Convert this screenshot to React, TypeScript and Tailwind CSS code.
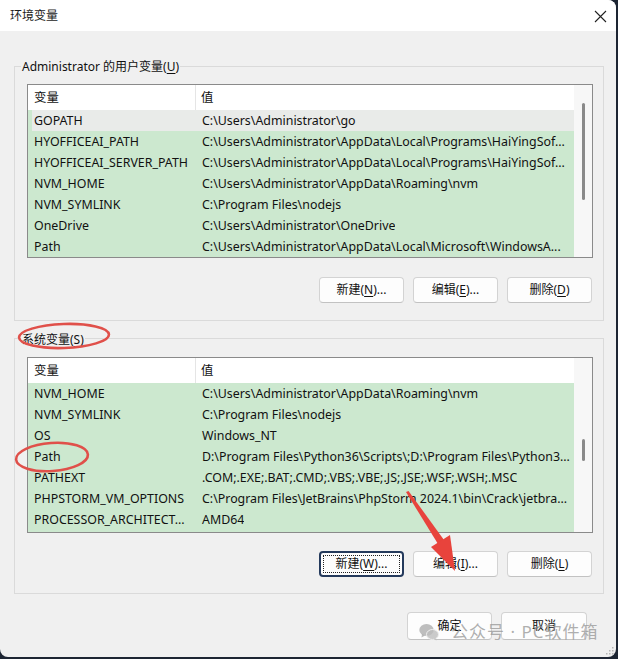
import React from "react";

const U = ({ children }: { children: React.ReactNode }) => (
  <span className="underline underline-offset-[2px] decoration-[1px]">{children}</span>
);

type Row = [string, string];

const userRows: Row[] = [
  ["GOPATH", "C:\\Users\\Administrator\\go"],
  ["HYOFFICEAI_PATH", "C:\\Users\\Administrator\\AppData\\Local\\Programs\\HaiYingSof..."],
  ["HYOFFICEAI_SERVER_PATH", "C:\\Users\\Administrator\\AppData\\Local\\Programs\\HaiYingSof..."],
  ["NVM_HOME", "C:\\Users\\Administrator\\AppData\\Roaming\\nvm"],
  ["NVM_SYMLINK", "C:\\Program Files\\nodejs"],
  ["OneDrive", "C:\\Users\\Administrator\\OneDrive"],
  ["Path", "C:\\Users\\Administrator\\AppData\\Local\\Microsoft\\WindowsA..."],
];

const sysRows: Row[] = [
  ["NVM_HOME", "C:\\Users\\Administrator\\AppData\\Roaming\\nvm"],
  ["NVM_SYMLINK", "C:\\Program Files\\nodejs"],
  ["OS", "Windows_NT"],
  ["Path", "D:\\Program Files\\Python36\\Scripts\\;D:\\Program Files\\Python3..."],
  ["PATHEXT", ".COM;.EXE;.BAT;.CMD;.VBS;.VBE;.JS;.JSE;.WSF;.WSH;.MSC"],
  ["PHPSTORM_VM_OPTIONS", "C:\\Program Files\\JetBrains\\PhpStorm 2024.1\\bin\\Crack\\jetbra..."],
  ["PROCESSOR_ARCHITECT...", "AMD64"],
  ["", ""],
];

function VarList({
  rows,
  heightClass,
  thumbTopClass,
  thumbHClass,
  firstGray,
}: {
  rows: Row[];
  heightClass: string;
  thumbTopClass: string;
  thumbHClass: string;
  firstGray?: boolean;
}) {
  return (
    <div className={`flex overflow-hidden border border-[#8a8a8a] bg-white text-[12.4px] ${heightClass}`}>
      <div className="flex min-w-0 flex-1 flex-col">
        <div className="flex h-[25px] shrink-0 items-center bg-white">
          <div className="flex h-full w-[168px] items-center border-r border-[#e5e5e5] pl-[6px] pt-[1px]">变量</div>
          <div className="pl-[5px] pt-[1px]">值</div>
        </div>
        {rows.map(([k, v], i) => (
          <div
            key={i}
            className={`flex h-[21px] shrink-0 items-center pt-[2px] ${
              firstGray && i === 0 ? "bg-[#e9ebe9]" : "bg-[#cce8cf]"
            }`}
          >
            {firstGray && i === 0 ? <div className="-mt-[2px] h-[21px] w-[4px] shrink-0 bg-[#cce8cf]" /> : null}
            <div
              className={`overflow-hidden whitespace-nowrap ${
                firstGray && i === 0 ? "w-[164px] pl-[2px]" : "w-[168px] pl-[6px]"
              }`}
            >
              {k}
            </div>
            <div className="overflow-hidden whitespace-nowrap pl-[6px]">{v}</div>
          </div>
        ))}
      </div>
      <div className="flex w-[18px] shrink-0 flex-col bg-[#f7f7f7]">
        <div className={`shrink-0 ${thumbTopClass}`} />
        <div className={`ml-[8px] w-[3px] shrink-0 rounded-full bg-[#8a8a8a] ${thumbHClass}`} />
      </div>
    </div>
  );
}

function Btn({ children, focused, wClass = "w-[85px]", hClass = "h-[26px]" }: { children: React.ReactNode; focused?: boolean; wClass?: string; hClass?: string }) {
  if (focused) {
    return (
      <div className={`${wClass} ${hClass} flex items-center justify-center rounded-[4px] border-2 border-[#243a5c] bg-[#fdfdfd] p-[2px]`}>
        <div className="flex h-full w-full items-center justify-center border border-dotted border-[#222]">{children}</div>
      </div>
    );
  }
  return (
    <div
      className={`${wClass} ${hClass} flex items-center justify-center rounded-[4px] border border-[#d3d3d3] border-b-[#c2c2c2] bg-[#fdfdfd]`}
    >
      {children}
    </div>
  );
}

export default function App() {
  return (
    <div className="relative h-[659px] w-[618px] overflow-hidden bg-[#1d2533] font-['Noto_Sans','Noto_Sans_CJK_SC',sans-serif] text-[12px] text-[#111]">
      <div className="flex h-[657px] w-[616px] flex-col overflow-hidden rounded-tr-[8px] rounded-b-[8px] bg-[#f0f0f0]">
        {/* Title bar */}
        <div className="flex h-[31px] shrink-0 items-center justify-between bg-white pl-[10px] pr-[9px]">
          <span className="text-[12px] text-[#1a1a1a]">环境变量</span>
          <svg width="13" height="13" viewBox="0 0 13 13" className="mt-[1px]">
            <path d="M1 1 L12 12 M12 1 L1 12" stroke="#222" strokeWidth="1.1" />
          </svg>
        </div>

        {/* User variables */}
        <div className="ml-[14px] mt-[35px] w-[590px] border border-[#dadada] pb-[17px]">
          <div className="-mt-[9px] ml-[6px] w-fit bg-[#f0f0f0] px-[1px] leading-[18px]">
            Administrator 的用户变量(<U>U</U>)
          </div>
          <div className="ml-[12px] mr-[10px] mt-[8px]">
            <VarList rows={userRows} heightClass="h-[174px]" thumbTopClass="h-[18px]" thumbHClass="h-[97px]" firstGray />
          </div>
          <div className="mr-[11px] mt-[19px] flex justify-end gap-[9px]">
            <Btn>新建(<U>N</U>)...</Btn>
            <Btn>编辑(<U>E</U>)...</Btn>
            <Btn>删除(<U>D</U>)</Btn>
          </div>
        </div>

        {/* System variables */}
        <div className="ml-[14px] mt-[17px] w-[590px] border border-[#dadada] pb-[16px]">
          <div className="-mt-[8px] ml-[6px] w-fit bg-[#f0f0f0] px-[1px] leading-[18px]">
            系统变量(<U>S</U>)
          </div>
          <div className="ml-[12px] mr-[10px] mt-[8px]">
            <VarList rows={sysRows} heightClass="h-[176px]" thumbTopClass="h-[81px]" thumbHClass="h-[22px]" />
          </div>
          <div className="mr-[11px] mt-[18px] flex justify-end gap-[9px]">
            <Btn focused>新建(<U>W</U>)...</Btn>
            <Btn>编辑(<U>I</U>)...</Btn>
            <Btn>删除(<U>L</U>)</Btn>
          </div>
        </div>

        {/* OK / Cancel */}
        <div className="mr-[29px] mt-[18px] flex justify-end gap-[9px]">
          <Btn hClass="h-[28px]">确定</Btn>
          <Btn wClass="w-[86px]" hClass="h-[28px]">取消</Btn>
        </div>

        {/* resize grip */}
        <div className="mt-auto mb-[2px] mr-[2px] flex justify-end">
          <svg width="10" height="10" viewBox="0 0 10 10">
            <g fill="#b5b5b5">
              <rect x="8" y="2" width="1.5" height="1.5" />
              <rect x="5" y="5" width="1.5" height="1.5" />
              <rect x="8" y="5" width="1.5" height="1.5" />
              <rect x="2" y="8" width="1.5" height="1.5" />
              <rect x="5" y="8" width="1.5" height="1.5" />
              <rect x="8" y="8" width="1.5" height="1.5" />
            </g>
          </svg>
        </div>
      </div>

      {/* Red annotations */}
      <svg className="pointer-events-none absolute left-0 top-0" width="618" height="659" viewBox="0 0 618 659">
        <ellipse cx="64" cy="336" rx="45" ry="12" fill="none" stroke="#e0504a" strokeWidth="2.6" transform="rotate(-2 64 336)" />
        <ellipse cx="52" cy="457" rx="36" ry="14" fill="none" stroke="#e0504a" strokeWidth="2.6" transform="rotate(-4 52 457)" />
        <polygon points="406,492 408.5,491 444,540 438,544" fill="#e8433c" />
        <polygon points="431,547 450,535 455,571" fill="#e8433c" />
      </svg>

      {/* Watermark */}
      <div className="pointer-events-none absolute left-[419px] top-[620px] flex items-center gap-[12px] text-[#9a9a9a]/80">
        <svg width="20" height="18" viewBox="0 0 20 18">
          <ellipse cx="7.5" cy="7" rx="7.2" ry="6" fill="#a8a8a8" fillOpacity="0.75" />
          <path d="M3 11 L2.5 14.5 L6 12.5 Z" fill="#a8a8a8" fillOpacity="0.75" />
          <ellipse cx="13.5" cy="11.5" rx="6" ry="5" fill="#bdbdbd" fillOpacity="0.8" stroke="#f0f0f0" strokeWidth="1" />
          <path d="M16.5 15 L17.5 17.5 L14.5 16 Z" fill="#bdbdbd" fillOpacity="0.8" />
        </svg>
        <span className="text-[17px] leading-[24px] tracking-[1px]">公众号 · PC软件箱</span>
      </div>
    </div>
  );
}
